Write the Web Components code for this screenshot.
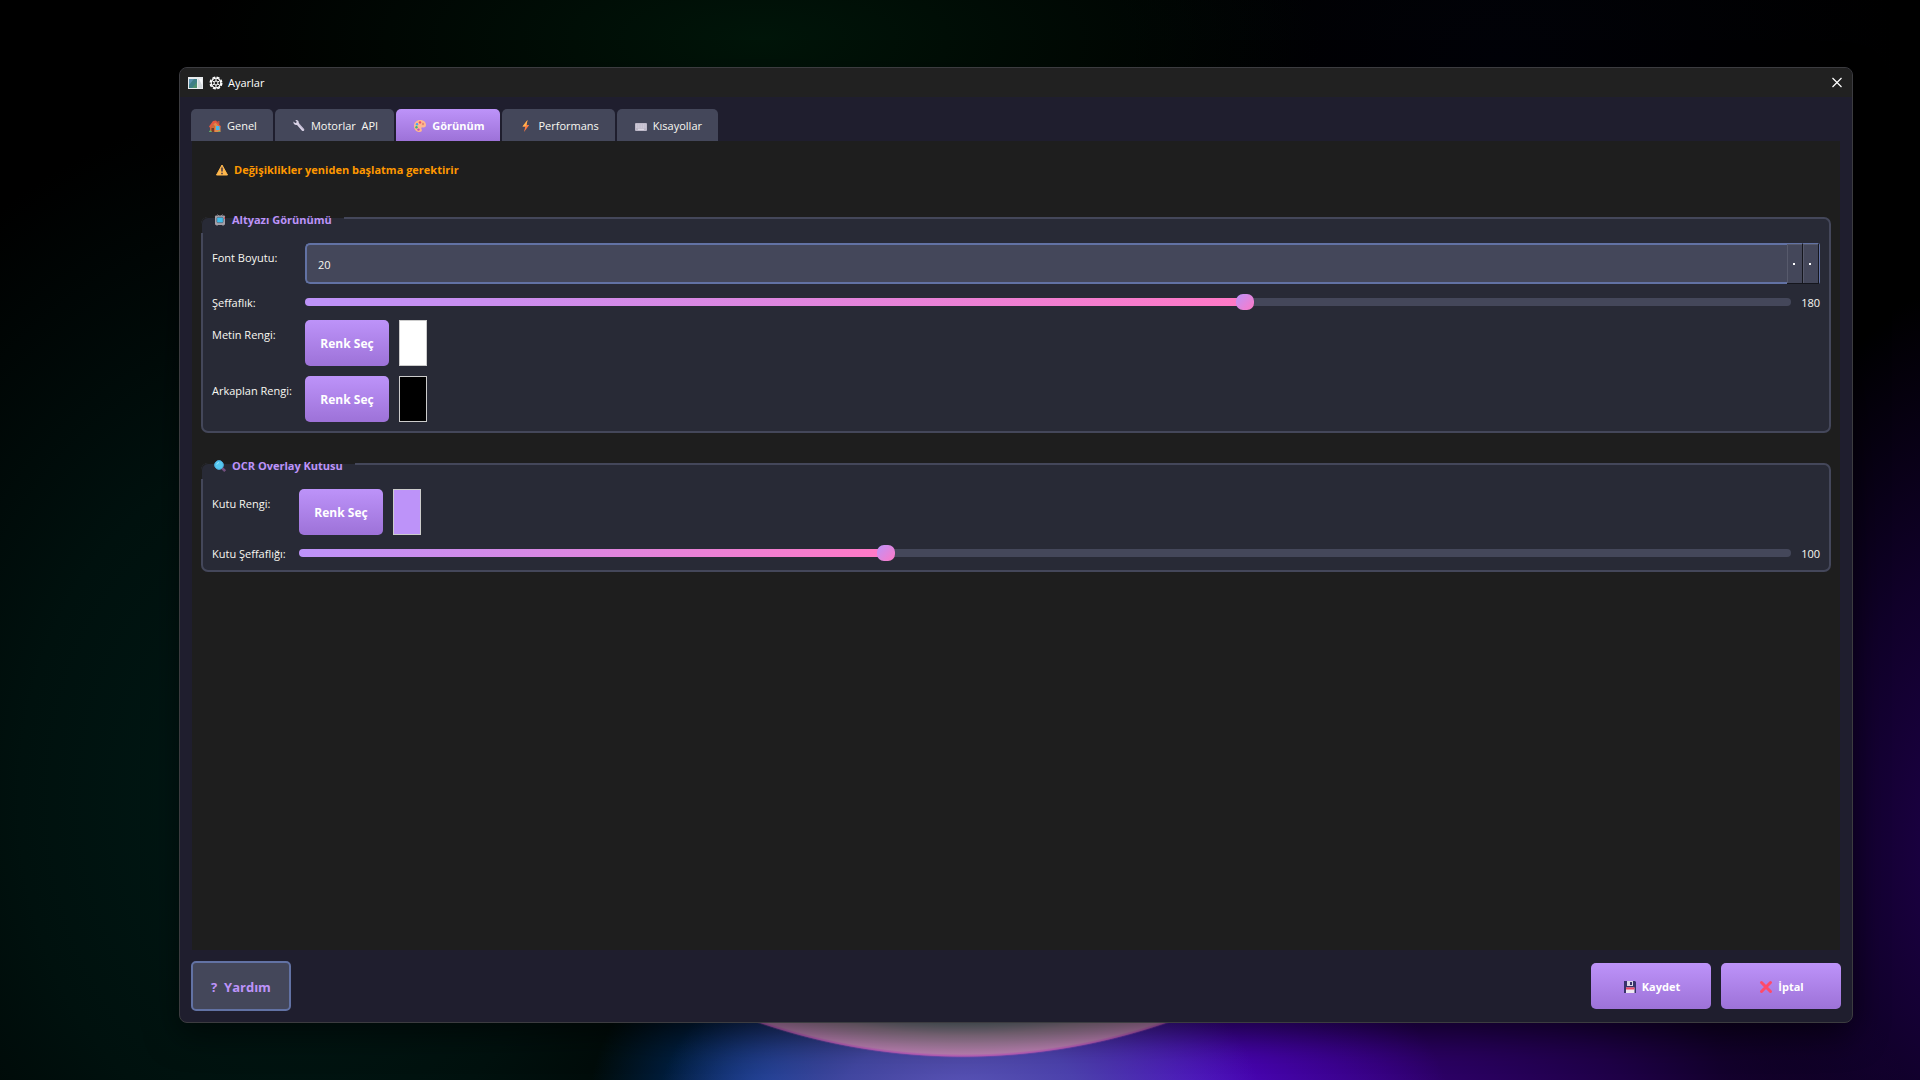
<!DOCTYPE html>
<html lang="tr">
<head>
<meta charset="UTF-8">
<meta name="viewport" content="width=device-width, initial-scale=1.0">
<title>Ayarlar</title>
<style>
    :root {
        --bg-window: #1f1e2e;
        --bg-pane: #1e1e1e;
        --bg-group: #282a36;
        --line: #44475a;
        --focus: #6272a4;
        --accent: #bd93f9;
        --accent-dark: #9d72d8;
        --pink: #ff79c6;
        --text: #f8f8f2;
        --warning: #ff9800;
    }

    body {
        margin: 0;
        background: #000;
        color: var(--text);
        font: 11px/16px "Open Sans", "Noto Sans", sans-serif;
    }
</style>
</head>
<body>
<app-desktop>
    <settings-window heading="Ayarlar">
        <tab-strip slot="tabs">
            <tab-item icon="house">Genel</tab-item>
            <tab-item icon="wrench">Motorlar&nbsp; API</tab-item>
            <tab-item icon="palette" selected>Görünüm</tab-item>
            <tab-item icon="bolt">Performans</tab-item>
            <tab-item icon="keyboard">Kısayollar</tab-item>
        </tab-strip>

        <warning-note>Değişiklikler yeniden başlatma gerektirir</warning-note>

        <group-box icon="tv" heading="Altyazı Görünümü" style="--label-width: 93px">
            <spin-row label="Font Boyutu:" value="20"></spin-row>
            <slider-row label="Şeffaflık:" min="50" max="255" value="180"></slider-row>
            <color-row label="Metin Rengi:" color="#ffffff"></color-row>
            <color-row label="Arkaplan Rengi:" color="#000000"></color-row>
        </group-box>

        <group-box icon="search" heading="OCR Overlay Kutusu" style="--label-width: 87px">
            <color-row label="Kutu Rengi:" color="#bd93f9"></color-row>
            <slider-row label="Kutu Şeffaflığı:" min="0" max="255" value="100"></slider-row>
        </group-box>

        <push-button slot="help" kind="help">?&nbsp; Yardım</push-button>
        <push-button slot="actions" kind="action" icon="floppy">Kaydet</push-button>
        <push-button slot="actions" kind="action" icon="cross">İptal</push-button>
    </settings-window>
</app-desktop>

<script>
const ICONS = {
    app: `<rect x="0" y="2" width="15" height="12" fill="#e9ecee"/><rect x="1" y="4" width="8" height="9" fill="#3f7f86"/><path d="M1 4h5l-5 6z" fill="#5e93b0"/><path d="M4 13l5-6v6z" fill="#4f9170"/><rect x="10" y="4" width="4" height="9" fill="#d5dadd"/><path d="M11 4h3v6z" fill="#f7f9fa"/>`,
    gear: `<g fill="none" stroke="#fff"><circle cx="8" cy="8" r="4.800" stroke-width="1.200"/><circle cx="8" cy="8" r="2" stroke-width="1"/><circle cx="8" cy="8" r="5.800" stroke-width="1.400" stroke-dasharray="3 1.555"/><path d="M8 3.500V6M8 10v2.500M4.100 5.700l2.200 1.300M9.700 9l2.200 1.300M4.100 10.300L6.300 9M9.700 7l2.200-1.300" stroke-width="1"/></g>`,
    house: `<path d="M10.500 3h2v3h-2z" fill="#b5543c"/><path d="M3 8l5-4.500L13.500 9v5H3z" fill="#e08a4a"/><path d="M3 8.500l3-2.500 2 2v6H3z" fill="#c96a3c"/><path d="M2 8.500L6 3l3-.5 5 6-1 1-4.500-5L3 9.700z" fill="#e4573f"/><rect x="9" y="8" width="3.500" height="4" fill="#45b8ee"/><rect x="4.500" y="10" width="2.500" height="4" fill="#713b2a"/><path d="M2 14c.5-2 2-2 3 0zM11 14c.5-1.500 2-1.500 2.500 0z" fill="#61bd6b"/>`,
    wrench: `<path d="M2.500 3.500l1.700 1.600 1.200-.3.200-1.200L4.300 2.200c2-.6 3.700.8 3.500 2.800l5.200 5.900c.9 1.400-.7 2.800-2 1.900L6 7C3.900 7.500 2 5.700 2.500 3.500z" fill="#d9d2e6"/><path d="M8 6.200l4.800 5.300" stroke="#aaa2bd" stroke-width=".8"/>`,
    palette: `<path d="M8 2c4 0 6 2.500 6 5 0 2.300-2 2.600-3.300 2.400-1.400-.2-1.700.8-1.100 1.800.9 1.600-.2 2.800-2 2.800C4 14 2 11.300 2 8c0-3.500 2.700-6 6-6z" fill="#ffb78e"/><circle cx="5" cy="6.200" r="1.200" fill="#42a5f5"/><circle cx="8" cy="4.400" r="1.200" fill="#ef4969"/><circle cx="11" cy="6" r="1.200" fill="#e58a78"/><circle cx="4.500" cy="9.200" r="1.200" fill="#37b27d"/><circle cx="6.500" cy="11.600" r="1.200" fill="#c04fc0"/>`,
    bolt: `<path d="M9.500 2L4.500 8.600h2.800L6 14l5.200-7H8.500z" fill="#ff7a42"/><path d="M9.500 2L4.500 8.600h3L8.500 7z" fill="#ffb44d"/>`,
    keyboard: `<rect x="2" y="5" width="12" height="8" rx="1" fill="#bdb8c8"/><path d="M3 7h10M3 9h10" stroke="#dcd8e4" stroke-dasharray="1.200 .5"/><path d="M5 11.300h6" stroke="#e4e0ea"/>`,
    warning: `<path d="M8 3L13.500 13H2.500z" fill="#ffb84d" stroke="#ffb84d" stroke-linejoin="round"/><path d="M8 5.500v4M8 10.700v1.500" stroke="#4b3b48" stroke-width="1.600"/>`,
    tv: `<rect x="3" y="3.500" width="10" height="9.500" rx="1" fill="#a5a0a8"/><rect x="4.800" y="5.300" width="6.400" height="5.400" rx="1" fill="#3fbdeb" stroke="#55505e" stroke-width=".6"/><path d="M12 5h1v2h-1z" fill="#d95a60"/><path d="M5.500 2.500L7 4M10.500 2.500L9 4M5 13v1M11 13v1" stroke="#8f8993"/>`,
    search: `<path d="M9.500 9.500l3.700 3.700" stroke="#73507f" stroke-width="2.600"/><circle cx="7" cy="7" r="4.400" fill="#55c9f1" stroke="#4aa6d4"/><path d="M4.800 6.500a3 3 0 012.200-2" stroke="#a3e6fc" fill="none"/>`,
    floppy: `<path d="M2 2h11l1 1v11H2z" fill="#39326b"/><rect x="5" y="2" width="6" height="5" fill="#d9d5e7"/><rect x="8" y="3" width="2" height="3" fill="#39326b"/><rect x="4" y="8.500" width="8.500" height="5.500" fill="#eee8f2"/><rect x="4" y="8.500" width="8.500" height="2" fill="#ef4665"/>`,
    cross: `<path d="M3.500 3.500l9 9M12.500 3.500l-9 9" stroke="#ff4a69" stroke-width="3" stroke-linecap="round"/>`,
    close: `<path d="M3.500 3l9 9M12.500 3l-9 9" stroke="#fff" stroke-width="1.200"/>`
};

const icon = (name, size = 16) =>
    `<svg width="${size}" height="${size}" viewBox="0 0 16 16" aria-hidden="true">${ICONS[name]}</svg>`;

const fieldStyles = `
    :host { display: grid; grid-template-columns: var(--label-width) minmax(0, 1fr); align-items: start; }
    label { padding-top: 7px; white-space: nowrap; }
    button { font: inherit; cursor: pointer; }
`;

class AppDesktop extends HTMLElement {
    constructor() {
        super();
        this.attachShadow({ mode: 'open' }).innerHTML = `
            <style>
                :host {
                    display: flex;
                    box-sizing: border-box;
                    min-height: 100vh;
                    padding: 67px 67px 57px 179px;
                    background:
                        radial-gradient(circle 631px at 50% -573px, transparent 627px, #b84cbcaa 629px, transparent 631px) 3px 100% / 100% 80px no-repeat,
                        radial-gradient(circle 630px at 50% -573px, #5f7478 592px, #977f94 608px, #bd80b4 629px, transparent 630px) 3px 100% / 100% 80px no-repeat,
                        radial-gradient(ellipse 300px 170px at 960px 1100px, #5b56bb 0%, #5050b4cc 40%, transparent 100%),
                        radial-gradient(ellipse 180px 160px at 770px 1100px, #003c8c 0%, #00357aaa 40%, transparent 100%),
                        radial-gradient(ellipse 260px 170px at 1190px 1110px, #5206cf 0%, #4804b4cc 40%, transparent 100%),
                        radial-gradient(ellipse 560px 260px at 1350px 1110px, #35007a 0%, #1e0046 50%, transparent 100%),
                        radial-gradient(ellipse 260px 560px at 1960px 850px, #1d0048 0%, #100029 50%, transparent 100%),
                        radial-gradient(ellipse 560px 200px at 760px 40px, #001509 0%, transparent 100%),
                        radial-gradient(ellipse 400px 300px at 1500px 60px, #010208 0%, transparent 100%),
                        radial-gradient(ellipse 560px 700px at 300px 800px, #001a16 0%, #00110e 50%, transparent 100%),
                        #000;
                }
            </style>
            <slot></slot>
        `;
    }
}

class SettingsWindow extends HTMLElement {
    connectedCallback() {
        this.attachShadow({ mode: 'open' }).innerHTML = `
            <style>
                :host {
                    display: flex;
                    flex: 1;
                    flex-direction: column;
                    min-width: 0;
                    border: 1px solid #3c3c40;
                    border-radius: 8px;
                    overflow: hidden;
                    background: var(--bg-window);
                    box-shadow: 0 12px 32px rgba(0, 0, 0, 0.5);
                }
                header {
                    display: flex;
                    align-items: center;
                    gap: 4px;
                    height: 29px;
                    padding: 0 7px 0 8px;
                    background: #212121;
                    color: #fff;
                }
                h1 { margin: 0 auto 0 0; font: inherit; }
                svg { display: block; }
                .close { padding: 0; border: 0; background: none; cursor: pointer; }
                .tabs { padding: 12px 11px 0; }
                main {
                    display: flex;
                    flex: 1;
                    flex-direction: column;
                    gap: 30px;
                    margin: 0 12px;
                    padding: 9px;
                    background: var(--bg-pane);
                }
                footer {
                    display: flex;
                    align-items: center;
                    gap: 10px;
                    padding: 11px;
                }
                .help { margin-right: auto; }
            </style>
            <header>
                ${icon('app')}
                ${icon('gear')}
                <h1>${this.getAttribute('heading')}</h1>
                <button class="close" aria-label="Kapat">${icon('close')}</button>
            </header>
            <div class="tabs"><slot name="tabs"></slot></div>
            <main><slot></slot></main>
            <footer>
                <div class="help"><slot name="help"></slot></div>
                <slot name="actions"></slot>
            </footer>
        `;
    }
}

class TabStrip extends HTMLElement {
    constructor() {
        super();
        this.attachShadow({ mode: 'open' }).innerHTML = `
            <style>
                :host { display: flex; gap: 2px; }
            </style>
            <slot></slot>
        `;
    }

    connectedCallback() {
        this.setAttribute('role', 'tablist');
    }
}

class TabItem extends HTMLElement {
    connectedCallback() {
        this.attachShadow({ mode: 'open' }).innerHTML = `
            <style>
                :host { display: block; }
                button {
                    display: flex;
                    align-items: center;
                    gap: 4px;
                    height: 32px;
                    padding: 2px 16px 0;
                    border: 0;
                    border-radius: 5px 5px 0 0;
                    background: var(--line);
                    color: var(--text);
                    font: inherit;
                    white-space: nowrap;
                    cursor: pointer;
                }
                :host([selected]) button {
                    background: linear-gradient(var(--accent), var(--accent-dark));
                    color: #fff;
                    font-weight: 700;
                }
            </style>
            <button role="tab" aria-selected="${this.hasAttribute('selected')}">
                ${icon(this.getAttribute('icon'))}<span><slot></slot></span>
            </button>
        `;
    }
}

class WarningNote extends HTMLElement {
    constructor() {
        super();
        this.attachShadow({ mode: 'open' }).innerHTML = `
            <style>
                :host {
                    display: flex;
                    align-items: center;
                    gap: 4px;
                    padding: 12px 14px 9px 13px;
                    color: var(--warning);
                    font-weight: 700;
                }
            </style>
            ${icon('warning')}<span><slot></slot></span>
        `;
    }
}

class GroupBox extends HTMLElement {
    connectedCallback() {
        this.attachShadow({ mode: 'open' }).innerHTML = `
            <style>
                :host { display: block; }
                section {
                    position: relative;
                    display: flex;
                    flex-direction: column;
                    gap: 10px;
                    padding: 24px 9px 9px;
                    border: 2px solid var(--line);
                    border-radius: 7px;
                    background: var(--bg-group);
                }
                /* the title lies over the frame's top left corner */
                h2 {
                    position: absolute;
                    top: -7px;
                    left: -2px;
                    display: flex;
                    align-items: center;
                    gap: 4px;
                    isolation: isolate;
                    margin: 0;
                    padding: 0 12px 0 11px;
                    color: var(--accent);
                    font: inherit;
                    font-weight: 700;
                    white-space: nowrap;
                }
                h2::before {
                    content: "";
                    position: absolute;
                    inset: 5px 0 -5px;
                    z-index: -1;
                    border-top: 1px solid var(--bg-pane);
                    border-left: 1px solid var(--bg-pane);
                    border-radius: 7px 0 0 0;
                    background: var(--bg-group);
                }
            </style>
            <section>
                <h2>${icon(this.getAttribute('icon'))}${this.getAttribute('heading')}</h2>
                <slot></slot>
            </section>
        `;
    }
}

class SpinRow extends HTMLElement {
    connectedCallback() {
        this.attachShadow({ mode: 'open' }).innerHTML = `
            <style>
                ${fieldStyles}
                .spin {
                    display: flex;
                    box-sizing: border-box;
                    height: 41px;
                    border-radius: 5px 2px 2px 5px;
                    background: #14151c;
                    border-right: 1px solid var(--focus);
                }
                input {
                    flex: 1;
                    min-width: 0;
                    box-sizing: border-box;
                    padding: 2px 11px 0;
                    border: 2px solid var(--focus);
                    border-right: 0;
                    border-radius: 5px 0 0 5px;
                    outline: 0;
                    background: var(--line);
                    color: inherit;
                    font: inherit;
                    appearance: textfield;
                }
                input::-webkit-inner-spin-button { appearance: none; margin: 0; }
                button {
                    width: 16px;
                    padding: 0 2px 0 0;
                    border: solid #15161d;
                    border-width: 0 1px 1px 0;
                    border-top: 1px solid var(--focus);
                    background: var(--line);
                    box-shadow: inset 1px 1px #575a6c;
                    color: #fff;
                }
                button::before {
                    content: "";
                    display: block;
                    width: 2px;
                    height: 2px;
                    margin: 0 auto;
                    background: #fff;
                }
            </style>
            <label for="field">${this.getAttribute('label')}</label>
            <div class="spin">
                <input id="field" type="number" value="${this.getAttribute('value')}">
                <button data-step="1" aria-label="Artır"></button>
                <button data-step="-1" aria-label="Azalt"></button>
            </div>
        `;
        const input = this.shadowRoot.querySelector('input');
        this.shadowRoot.querySelectorAll('button').forEach((button) => {
            button.addEventListener('click', () => {
                input.value = Number(input.value) + Number(button.dataset.step);
            });
        });
    }
}

class SliderRow extends HTMLElement {
    connectedCallback() {
        const attr = (name) => this.getAttribute(name);
        this.attachShadow({ mode: 'open' }).innerHTML = `
            <style>
                ${fieldStyles}
                :host { height: 16px; }
                label { padding-top: 1px; }
                .control { display: flex; gap: 10px; }
                input {
                    flex: 1;
                    min-width: 0;
                    height: 16px;
                    margin: 0;
                    appearance: none;
                    background: none;
                }
                input::-webkit-slider-runnable-track {
                    height: 8px;
                    border-radius: 4px;
                    background:
                        linear-gradient(90deg, var(--accent), var(--pink)) 0 0 / calc(9px + (100% - 18px) * var(--ratio)) 100% no-repeat,
                        var(--line);
                }
                input::-webkit-slider-thumb {
                    appearance: none;
                    width: 18px;
                    height: 16px;
                    margin-top: -4px;
                    border-radius: 7px;
                    background: linear-gradient(135deg, var(--accent), var(--pink));
                }
                output { padding-top: 1px; }
            </style>
            <label for="field">${attr('label')}</label>
            <div class="control">
                <input id="field" type="range" min="${attr('min')}" max="${attr('max')}" value="${attr('value')}">
                <output for="field"></output>
            </div>
        `;
        this.input = this.shadowRoot.querySelector('input');
        this.input.addEventListener('input', () => this.update());
        this.update();
    }

    update() {
        const { min, max, value } = this.input;
        this.input.style.setProperty('--ratio', (value - min) / (max - min));
        this.shadowRoot.querySelector('output').textContent = value;
    }
}

class ColorRow extends HTMLElement {
    connectedCallback() {
        this.attachShadow({ mode: 'open' }).innerHTML = `
            <style>
                ${fieldStyles}
                .control { display: flex; gap: 10px; }
                button {
                    width: 84px;
                    height: 46px;
                    padding: 2px 0 0;
                    border: 0;
                    border-radius: 5px;
                    background: linear-gradient(var(--accent), var(--accent-dark));
                    color: #fff;
                    font-size: 12px;
                    font-weight: 700;
                }
                .swatch {
                    box-sizing: border-box;
                    width: 28px;
                    border: 1px solid #ccc;
                    background: ${this.getAttribute('color')};
                }
            </style>
            <label for="pick">${this.getAttribute('label')}</label>
            <div class="control">
                <button id="pick">Renk Seç</button>
                <span class="swatch"></span>
            </div>
        `;
    }
}

class PushButton extends HTMLElement {
    connectedCallback() {
        const name = this.getAttribute('icon');
        this.attachShadow({ mode: 'open' }).innerHTML = `
            <style>
                :host { display: block; }
                button {
                    display: flex;
                    align-items: center;
                    justify-content: center;
                    gap: 4px;
                    box-sizing: border-box;
                    width: 120px;
                    height: 46px;
                    padding: 2px 0 0;
                    border: 0;
                    border-radius: 5px;
                    background: linear-gradient(var(--accent), var(--accent-dark));
                    color: #fff;
                    font: inherit;
                    font-weight: 700;
                    cursor: pointer;
                }
                :host([kind="help"]) button {
                    width: 100px;
                    height: 50px;
                    border: 2px solid var(--focus);
                    background: var(--line);
                    color: var(--accent);
                    font-size: 13px;
                }
            </style>
            <button>${name ? icon(name) : ''}<span><slot></slot></span></button>
        `;
    }
}

customElements.define('app-desktop', AppDesktop);
customElements.define('settings-window', SettingsWindow);
customElements.define('tab-strip', TabStrip);
customElements.define('tab-item', TabItem);
customElements.define('warning-note', WarningNote);
customElements.define('group-box', GroupBox);
customElements.define('spin-row', SpinRow);
customElements.define('slider-row', SliderRow);
customElements.define('color-row', ColorRow);
customElements.define('push-button', PushButton);
</script>
</body>
</html>
